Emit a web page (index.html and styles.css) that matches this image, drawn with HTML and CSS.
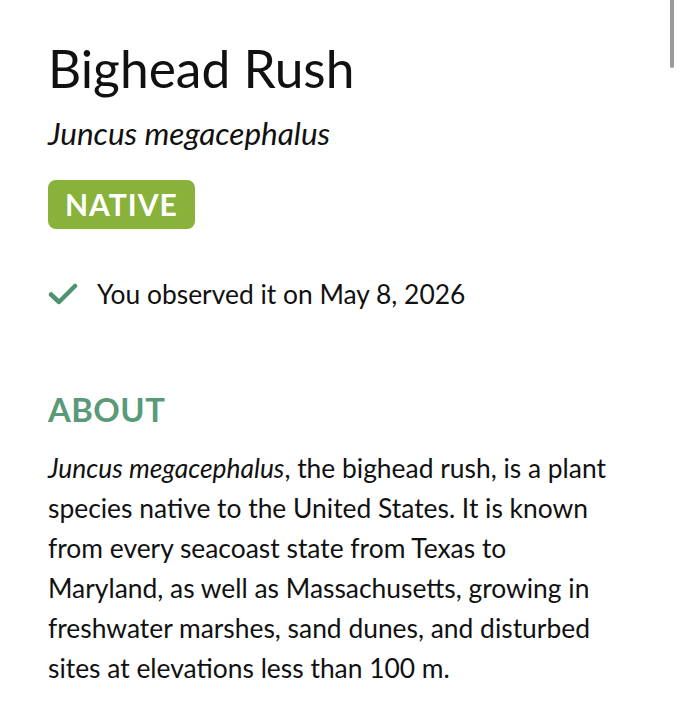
FILE: index.html
```html
<!DOCTYPE html>
<html lang="en">
<head>
<meta charset="utf-8">
<title>Bighead Rush</title>
<link rel="stylesheet" href="styles.css">
</head>
<body>
<div class="scrollbar"></div>
<main class="page">
  <h1 class="title">Bighead Rush</h1>
  <p class="sci">Juncus megacephalus</p>
  <div class="badge-row"><span class="badge">NATIVE</span></div>
  <div class="observed">
    <svg class="check" width="30" height="22" viewBox="0 0 30 22" aria-hidden="true">
      <path d="M3 11.5 L11 19 L27 3" fill="none" stroke="#4f9172" stroke-width="4.5" stroke-linecap="round" stroke-linejoin="round"/>
    </svg>
    <span>You observed it on May 8, 2026</span>
  </div>
  <h2 class="section">ABOUT</h2>
  <p class="about"><em>Juncus megacephalus</em>, the bighead rush, is a plant species native to the United States. It is known from every seacoast state from Texas to Maryland, as well as Massachusetts, growing in freshwater marshes, sand dunes, and disturbed sites at elevations less than 100 m.</p>
</main>
</body>
</html>
```
FILE: styles.css
```css
html, body {
  margin: 0;
  padding: 0;
  background: #ffffff;
}
body {
  font-family: Lato, "Noto Sans", sans-serif;
  color: #111111;
  position: relative;
  min-height: 720px;
  overflow: hidden;
}
.scrollbar {
  position: absolute;
  top: 0;
  left: 670px;
  width: 4px;
  height: 68px;
  background: #9a9a9a;
  border-radius: 0 0 2px 2px;
}
.page {
  padding: 36px 48px 0 48px;
  width: 570px;
}
.title {
  margin: 0;
  font-weight: 400;
  font-size: 51.5px;
  line-height: 64px;
}
.sci {
  margin: 0;
  margin-top: 14px;
  font-style: italic;
  font-size: 31.5px;
  line-height: 38px;
}
.badge-row {
  margin-top: 28px;
  display: flex;
}
.badge {
  background: #88b23a;
  color: #ffffff;
  font-weight: 700;
  font-size: 30px;
  letter-spacing: 1px;
  line-height: 49px;
  height: 49px;
  padding: 0 17px;
  border-radius: 8px;
}
.observed {
  margin-top: 49px;
  display: flex;
  align-items: center;
  gap: 19px;
  font-size: 26.4px;
  line-height: 32px;
}
.check {
  display: block;
}
.section {
  margin: 82px 0 0 0;
  font-size: 32.8px;
  font-weight: 700;
  color: #5a9a78;
  letter-spacing: 0.5px;
  line-height: 36px;
}
.about {
  margin: 20px 0 0 0;
  font-size: 26.4px;
  line-height: 40px;
}
.about em {
  font-style: italic;
}
```
